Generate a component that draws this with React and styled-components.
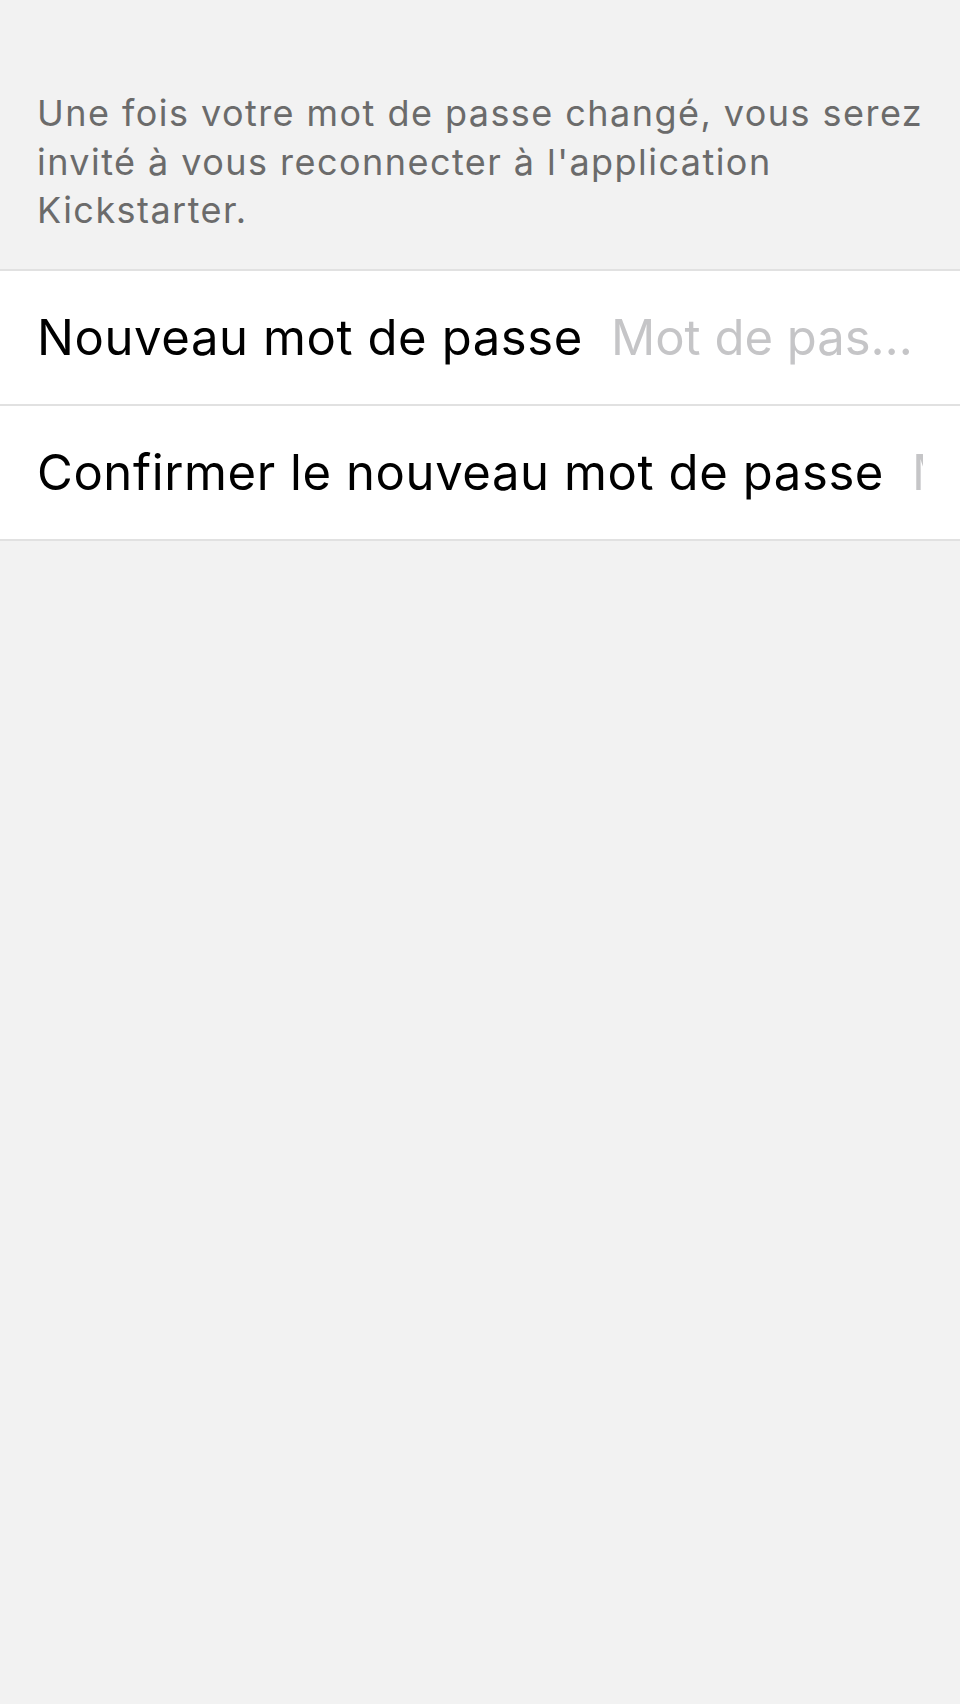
import React from "react";
import styled, { createGlobalStyle } from "styled-components";

const GlobalStyle = createGlobalStyle`
  html, body {
    margin: 0;
    padding: 0;
    background: #f2f2f2;
  }
  body {
    font-family: Inter, "Noto Sans", sans-serif;
  }
`;

const Screen = styled.div`
  min-height: 1704px;
  background: #f2f2f2;
`;

const Notice = styled.p`
  margin: 0;
  padding: 89px 28px 34px 37px;
  font-size: 36px;
  line-height: 48.5px;
  letter-spacing: 1.45px;
  color: #6b6b6b;
`;

const FieldList = styled.div`
  border-top: 2px solid #e1e1e1;
  background: #ffffff;
`;

const FieldRow = styled.label`
  display: flex;
  align-items: center;
  gap: 28px;
  height: 135px;
  padding: 0 37px;
  border-bottom: 2px solid #e1e1e1;
  box-sizing: border-box;
`;

const FieldLabel = styled.span`
  flex: none;
  white-space: nowrap;
  font-size: 49px;
  letter-spacing: 0.6px;
  color: #000000;
`;

const FieldInput = styled.input`
  flex: 1;
  min-width: 0;
  border: none;
  outline: none;
  padding: 0;
  background: transparent;
  font-family: inherit;
  font-size: 49px;
  letter-spacing: 0;
  color: #000000;
  text-overflow: ellipsis;

  &::placeholder {
    color: #c5c5c7;
    opacity: 1;
  }
`;

const fields = [
  { id: "new", label: "Nouveau mot de passe" },
  { id: "confirm", label: "Confirmer le nouveau mot de passe" },
];

function App() {
  return (
    <Screen>
      <GlobalStyle />
      <Notice>
        Une fois votre mot de passe changé, vous serez invité à vous reconnecter
        à l'application Kickstarter.
      </Notice>
      <FieldList>
        {fields.map((field) => (
          <FieldRow key={field.id}>
            <FieldLabel>{field.label}</FieldLabel>
            <FieldInput type="password" placeholder="Mot de passe" />
          </FieldRow>
        ))}
      </FieldList>
    </Screen>
  );
}

export default App;
